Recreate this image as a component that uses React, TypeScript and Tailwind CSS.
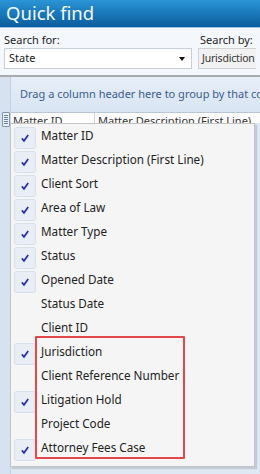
const columns: { label: string; checked: boolean }[] = [
  { label: "Matter ID", checked: true },
  { label: "Matter Description (First Line)", checked: true },
  { label: "Client Sort", checked: true },
  { label: "Area of Law", checked: true },
  { label: "Matter Type", checked: true },
  { label: "Status", checked: true },
  { label: "Opened Date", checked: true },
  { label: "Status Date", checked: false },
  { label: "Client ID", checked: false },
  { label: "Jurisdiction", checked: true },
  { label: "Client Reference Number", checked: false },
  { label: "Litigation Hold", checked: true },
  { label: "Project Code", checked: false },
  { label: "Attorney Fees Case", checked: true },
];

function Check() {
  return (
    <svg width="10" height="10" viewBox="0 0 10 10">
      <path d="M1.8 5.4 L4 7.8 L8.2 2" fill="none" stroke="#2b2bb0" strokeWidth="1.7" />
    </svg>
  );
}

function ColumnChooserIcon() {
  return (
    <div className="w-[8px] h-[15px] border border-[#7d93b0] bg-[#e9f0f8] rounded-[1px] flex flex-col justify-center gap-[1px] px-[1px]">
      <div className="h-px bg-[#6b7f99]" />
      <div className="h-px bg-[#6b7f99]" />
      <div className="h-px bg-[#6b7f99]" />
      <div className="h-px bg-[#6b7f99]" />
      <div className="h-px bg-[#6b7f99]" />
    </div>
  );
}

export default function App() {
  return (
    <div
      className="w-[260px] h-[474px] overflow-hidden bg-[#dde8f4] flex flex-col"
      style={{ fontFamily: '"Noto Sans", "Open Sans", sans-serif' }}
    >
      {/* title bar */}
      <div className="h-[28px] shrink-0 bg-gradient-to-b from-[#2a95d6] to-[#0a5c9d] border-b border-[#9cc3e4] flex items-center px-[6px]">
        <span className="text-[#f4f9ff] text-[18.5px] leading-none">Quick find</span>
      </div>

      {/* search panel */}
      <div className="h-[49px] shrink-0 bg-[#f4f7fb] border-b-2 border-[#a7abb0] flex gap-[6px] px-[4px] pt-[5px]">
        <div className="w-[188px] shrink-0 flex flex-col gap-[1px]">
          <span className="text-[11px] leading-[14px] text-[#222]">Search for:</span>
          <div className="h-[21px] bg-white border border-[#c8ced6] flex items-center justify-between px-[4px]">
            <span className="text-[11px] text-[#222]">State</span>
            <div className="w-0 h-0 border-l-[3.5px] border-r-[3.5px] border-t-[4px] border-l-transparent border-r-transparent border-t-[#111] mr-[2px]" />
          </div>
        </div>
        <div className="flex-1 min-w-0 flex flex-col gap-[1px]">
          <span className="text-[11px] leading-[14px] text-[#222] pl-[2px] whitespace-nowrap">Search by:</span>
          <div className="h-[21px] bg-[#f1f1f1] border border-r-0 border-[#cfd3d8] flex items-center pl-[3px]">
            <span className="text-[10.5px] tracking-[-0.2px] text-[#333] whitespace-nowrap">Jurisdiction</span>
          </div>
        </div>
      </div>

      {/* grid body */}
      <div className="flex-1 flex">
        <div className="w-[11px] shrink-0 bg-[#d6e2f0] border-r border-[#c2d1e3] flex flex-col">
          <div className="h-[35px]" />
          <div className="pl-[2px]">
            <ColumnChooserIcon />
          </div>
        </div>
        <div className="flex-1 flex flex-col min-w-0">
          <div className="h-[35px] shrink-0 bg-gradient-to-b from-[#e6eef8] to-[#d9e5f3] flex items-center pl-[9px] overflow-hidden">
            <span className="text-[11px] text-[#3a5d8c] whitespace-nowrap">Drag a column header here to group by that column</span>
          </div>
          <div className="h-[11px] shrink-0 bg-white border-t border-[#b9c6d6] flex overflow-hidden">
            <div className="w-[84px] border-r border-[#c9d2dc] text-[11px] leading-[15px] text-[#333] pl-[2px] whitespace-nowrap">Matter ID</div>
            <div className="flex-1 text-[11px] leading-[15px] text-[#333] pl-[3px] whitespace-nowrap">Matter Description (First Line)</div>
          </div>

          {/* column chooser menu */}
          <div className="relative w-[245px] -ml-px bg-[#f5f5f5] border border-[#c4c4c4] shadow-[2px_2px_1px_rgba(0,0,0,0.12)] pt-[2px] pb-[4px]">
            {columns.map((c) => (
              <div key={c.label} className="h-[24px] flex items-center">
                <div className="w-[30px] shrink-0 pl-[3px]">
                  {c.checked && (
                    <div className="w-[22px] h-[22px] rounded-[3px] bg-[#e9eef6] border border-[#d8e0ec] flex items-center justify-center">
                      <Check />
                    </div>
                  )}
                </div>
                <span className="text-[11.7px] leading-none text-[#222] whitespace-nowrap -mt-[5px]">{c.label}</span>
              </div>
            ))}
            <div className="absolute left-[24px] top-[212px] w-[150px] h-[123px] border-2 border-[#e5484b] rounded-[1px]" />
          </div>
        </div>
      </div>
    </div>
  );
}
